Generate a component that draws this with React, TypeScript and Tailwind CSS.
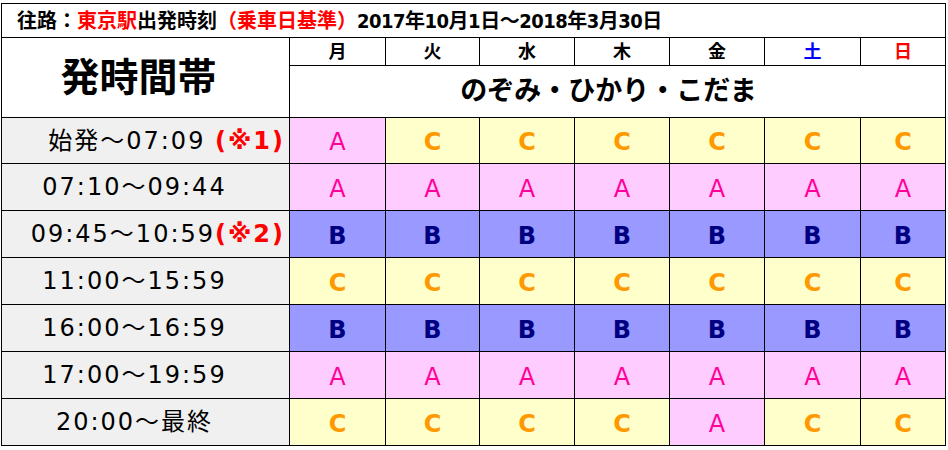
import React from "react";

type Fare = "A" | "B" | "C";

const rows: { label: React.ReactNode; right?: boolean; cells: Fare[] }[] = [
  {
    label: (
      <span>
        始発～07:09 <span className="font-bold text-[#ff0000]">(※1)</span>
      </span>
    ),
    right: true,
    cells: ["A", "C", "C", "C", "C", "C", "C"],
  },
  { label: "07:10～09:44", cells: ["A", "A", "A", "A", "A", "A", "A"] },
  {
    label: (
      <span>
        09:45～10:59<span className="font-bold text-[#ff0000]">(※2)</span>
      </span>
    ),
    right: true,
    cells: ["B", "B", "B", "B", "B", "B", "B"],
  },
  { label: "11:00～15:59", cells: ["C", "C", "C", "C", "C", "C", "C"] },
  { label: "16:00～16:59", cells: ["B", "B", "B", "B", "B", "B", "B"] },
  { label: "17:00～19:59", cells: ["A", "A", "A", "A", "A", "A", "A"] },
  { label: "20:00～最終", cells: ["C", "C", "C", "C", "A", "C", "C"] },
];

const days = [
  { d: "月", c: "text-black" },
  { d: "火", c: "text-black" },
  { d: "水", c: "text-black" },
  { d: "木", c: "text-black" },
  { d: "金", c: "text-black" },
  { d: "土", c: "text-[#0000ff]" },
  { d: "日", c: "text-[#ff0000]" },
];

const fareStyle: Record<Fare, string> = {
  A: "bg-[#ffccff] text-[#ff0099] font-normal",
  B: "bg-[#9999ff] text-[#000080] font-bold",
  C: "bg-[#ffffcc] text-[#ff9900] font-bold",
};

export default function App() {
  return (
    <div className="h-[450px] w-[948px] bg-white pl-px pt-[3px] font-['DejaVu_Sans','Noto_Sans_CJK_JP',sans-serif]">
      <div className="grid w-[945px] grid-cols-[287px_95px_93px_94px_94px_94px_95px_84px] grid-rows-[33px_27px_51px_45px_46px_46px_46px_46px_46px_46px] gap-px bg-black p-px">
        <div className="col-span-8 flex items-center whitespace-pre bg-white pl-[15px] font-['DejaVu_Sans_Condensed','DejaVu_Sans','Noto_Sans_CJK_JP',sans-serif] text-[20px] font-bold text-black">
          <span>
            往路：<span className="text-[#ff0000]">東京駅</span>出発時刻
            <span className="text-[#ff0000]">（乗車日基準）</span>
            <span className="tracking-[-0.5px]">2017年10月1日～2018年3月30日</span>
          </span>
        </div>
        <div className="row-span-2 flex items-center justify-center bg-white pr-[14px] pt-[2px] text-[39px] font-bold text-black">
          発時間帯
        </div>
        {days.map((x) => (
          <div key={x.d} className={`flex items-center justify-center bg-white text-[18px] font-bold ${x.c}`}>
            {x.d}
          </div>
        ))}
        <div className="col-span-7 flex items-center justify-center bg-white pr-[18px] text-[27px] font-bold text-black">
          のぞみ・ひかり・こだま
        </div>
        {rows.map((r, i) => (
          <React.Fragment key={i}>
            <div
              className={`flex items-center whitespace-pre bg-[#f0f0f0] text-[24px] tracking-[2px] text-black ${
                r.right ? "justify-end pr-[4px]" : "justify-center pr-[22px]"
              }`}
            >
              {r.label}
            </div>
            {r.cells.map((f, j) => (
              <div key={j} className={`flex items-center justify-center pt-[3px] text-[24px] ${fareStyle[f]}`}>
                {f}
              </div>
            ))}
          </React.Fragment>
        ))}
      </div>
    </div>
  );
}
